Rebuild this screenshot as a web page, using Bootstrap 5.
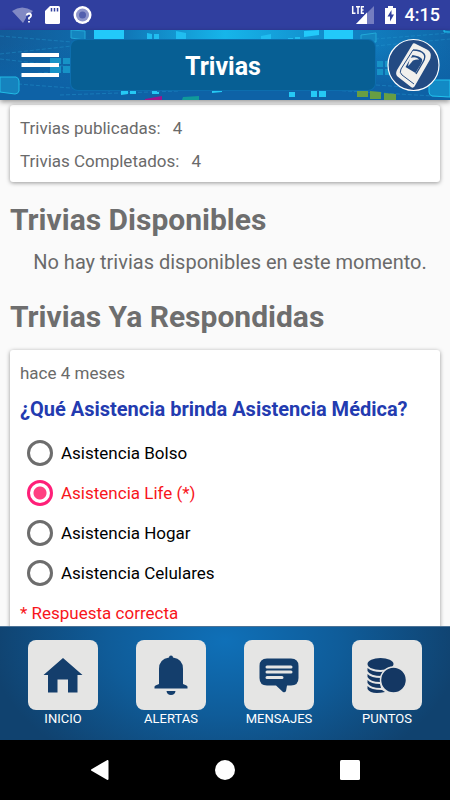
<!DOCTYPE html>
<html lang="es">
<head>
<meta charset="utf-8">
<meta name="viewport" content="width=device-width, initial-scale=1">
<title>Trivias</title>
<link rel="stylesheet" href="https://cdn.jsdelivr.net/npm/bootstrap@5.3.0/dist/css/bootstrap.min.css">
<style>
body{font-family:Roboto,"Liberation Sans",sans-serif;background:#fafafa;color:#6a6a6a;font-size:17px;line-height:24px}
svg{display:block}
.status-strip{height:30px;background:#303f9f;color:#fff;font-size:18px;font-weight:500;padding:0 10px 0 12px}
.top-bar{height:70px;background:#0f67ab;box-shadow:0 2px 5px rgba(0,0,0,.4);padding:0 10px 0 20px;z-index:2}
.top-art{z-index:-1}
.menu-btn{width:40px;height:28px}
.title-box{height:50px;margin:0 11px;background:#075f94;border-radius:7px;color:#fff;font-size:25px;line-height:53px;box-shadow:0 0 0 1px #0d6eae;font-weight:700}
.content-area{min-height:0;padding:5px 10px 0}
.panel{border-radius:3px;background:#fff;box-shadow:0 1px 4px rgba(0,0,0,.4);padding:7px 10px 4px}
.stat{line-height:33px}
.section-title{font-size:30px;line-height:35px;font-weight:700;color:#6e6e6e}
.empty-note{font-size:20px;line-height:26px;padding-left:10px}
.quiz{padding:11px 10px}
.question{font-size:20px;line-height:24px;font-weight:700;color:#233bb0}
.option{height:40px;padding-left:7px;color:#000}
.option .form-check-input{width:26px;height:26px;border:3px solid #6d6d6d;background:#fff}
.option .form-check-input:checked{border-color:#ff1f78;background:radial-gradient(circle,#ff4081 0 6px,#fff 7px)}
.right-answer{color:#f8151b}
.tab-bar{background:radial-gradient(ellipse 235px 150px at 50% 12%,#0f70b8,#0f5c99 50%,#10426f);height:114px;padding:13px 9px 0;border-top:1px solid #4d7396;z-index:2}
.tab-link{color:#fff;font-size:13px;line-height:18px}
.tile{width:70px;height:70px;border-radius:8px;background:#e5e5e4}
.sys-bar{height:60px;background:#000;gap:105px}
</style>
<script src="https://cdn.jsdelivr.net/npm/bootstrap@5.3.0/dist/js/bootstrap.bundle.min.js"></script>
</head>
<body class="d-flex flex-column vh-100 overflow-hidden">
<div class="status-strip d-flex align-items-center flex-shrink-0">
  <svg width="82" height="30" viewBox="12 0 82 30" aria-hidden="true">
    <path d="M12 11Q22 4 33 11L31 13Q26 13 26 18L23 23Z" fill="#8189c4"/>
    <path d="M26.500 15.500Q27 13.500 29 13.500Q31.300 13.700 31 15.800Q30.500 17 29 18V19.500M29 21V22.500" fill="none" stroke="#fff" stroke-width="1.800"/>
    <path d="M50 6H58.500Q60 6 60 7.500V22.500Q60 24 58.500 24H46.500Q45 24 45 22.500V11Z" fill="#fff"/>
    <path d="M51.500 8V11.500M54.500 8V11.500M57.500 8V11.500" stroke="#303f9f" stroke-width="1.500"/>
    <circle cx="82.500" cy="15" r="9" fill="#fff"/><circle cx="82.500" cy="15" r="6.500" fill="#8d95cb"/><circle cx="82.500" cy="15" r="3.500" fill="#5360ae"/>
  </svg>
  <svg class="ms-auto me-2" width="46" height="30" viewBox="351 0 46 30" aria-hidden="true">
    <path d="M374 6V24H356Z" fill="#747dc0"/><path d="M367 12.500V24H356Z" fill="#fff"/>
    <path d="M351 4H365V13H358V16H351Z" fill="#303f9f"/>
    <path d="M352.700 6V13.200H355.500M356 6.700H360M358 6.700V14M364 6.700H361.500V13.200H364M361.500 10H363.500" fill="none" stroke="#fff" stroke-width="1.500"/>
    <path d="M385 8H388V6H393V8H396V24H385Z" fill="#fff"/><path d="M391.500 10L387.500 16.500H390V21.500L394 14.500H391.500Z" fill="#303f9f"/>
  </svg>
  <span>4:15</span>
</div>
<header class="top-bar d-flex align-items-center flex-shrink-0 position-relative">
  <svg class="top-art position-absolute top-0 start-0 w-100 h-100" viewBox="0 0 450 70" preserveAspectRatio="xMidYMid slice" aria-hidden="true">
    <defs><linearGradient id="sky"><stop offset="0" stop-color="#125b98"/><stop offset=".25" stop-color="#0f6eb0"/><stop offset=".5" stop-color="#16b5ea"/><stop offset=".75" stop-color="#1186c7"/><stop offset="1" stop-color="#1067a9"/></linearGradient>
    <linearGradient id="low" x2="0" y2="1"><stop offset=".2" stop-color="#0c64a8" stop-opacity="0"/><stop offset=".8" stop-color="#0e62a6"/></linearGradient></defs>
    <path d="M0 0H450V70H0Z" fill="url(#sky)"/><path d="M0 0H450V70H0Z" fill="url(#low)"/>
    <g fill="none" stroke="#249bd1" stroke-width=".6" stroke-dasharray="4 2" opacity=".7"><path d="M0 6L72 12M0 24L72 16M0 29L72 37M20 45L72 40M18 54L110 61M60 65L180 61M375 9L450 3M375 16L450 9M330 60L450 67M376 55L405 57"/></g>
    <path d="M0 47H16Q19 48 19 51V61Q18 64 15 64L0 62Z" fill="#1583be" stroke="#22bce5"/>
    <path d="M71 0V8L85 10V1ZM361 5L376 3V12H361Z" fill="#1485bf" stroke="#22a9d8"/>
    <path d="M94 0H124V10H94ZM324 0H353V10H324ZM304 1L319 0V5L304 7Z" fill="#22c9fa"/>
    <path d="M147 3L152 4V9H147ZM154 4H159V9H154ZM176 1L186 3V10H176ZM261 6L271 4V10H261ZM288 8H293V10H288ZM295 7H300V10H295Z" fill="#20bdf0"/>
    <path d="M50 28H61V34H50ZM63 28H71V34H63ZM50 36H61V43H50ZM63 36H71V43H63ZM377 31H383V37H377ZM385 31H391V37H385ZM377 39H383V45H377ZM385 39H391V45H385Z" fill="#1793c7"/>
    <path d="M121 60H128V64L121 65ZM130 60H136V64H130ZM152 60H157V62H159V64H152ZM212 61L222 60V62L212 63ZM311 61H317V67H311ZM319 60H326V67H319ZM289 62H295V67H289Z" fill="#25c9f5"/>
    <path d="M145 69L162 66V70H145Z" fill="#9b168d"/><path d="M183 67L199 66V70H182Z" fill="#10999a"/>
    <path d="M357 60L368 61V67H357ZM370 61L381 62V69H370ZM384 63L396 64V70H384Z" fill="#689e43"/>
    <path d="M429 50H450V67L432 66Q429 65 429 62ZM444 0V2H450" fill="#128ac5" stroke="#20c3ee"/>
  </svg>
  <button type="button" class="menu-btn btn p-0 border-0 rounded-0" aria-label="Menú"><svg width="40" height="28" viewBox="0 0 40 28"><path d="M1.500 4H39M1.500 14H39M1.500 24H39" stroke="#fff" stroke-width="4"/></svg></button>
  <h1 class="title-box flex-grow-1 mb-0 text-center">Trivias</h1>
  <a href="#" aria-label="Perfil"><svg width="54" height="54" viewBox="0 0 54 54">
    <circle cx="27.500" cy="27" r="25.500" fill="#234b83" stroke="#fff" stroke-width="1.200"/>
    <path d="M27 5.500Q28 5 29 5.500L41 11.500Q46 14 44.500 20Q44 22 42 25L28.500 48.500Q27 50.500 25 49L11.500 38.500Q9 36 11 32Z" fill="#f1f0ed"/>
    <path d="M27 12L15 31Q13 34.500 16 37L28 46" fill="none" stroke="#234b83" stroke-width="1"/>
    <path d="M27 12Q35 12 38 16Q40 19 37 24L30 36" fill="none" stroke="#234b83" stroke-width="1.400"/>
    <path d="M26.500 17Q34 18 36 21Q37 23 35 26L29.500 35L19.500 29Z" fill="#234b83"/>
    <path d="M24 20Q31 18 33 22Q33 24 29 25L22 28Z" fill="#f1f0ed"/>
    <path d="M27 22.500Q33 20.500 34 23L28.500 32.500L21.500 29Z" fill="#234b83"/>
  </svg></a>
</header>
<main class="content-area flex-grow-1 overflow-hidden">
  <section class="panel">
    <div class="stat">Trivias publicadas:<span class="ps-2 ms-1">4</span></div>
    <div class="stat">Trivias Completados:<span class="ps-2 ms-1">4</span></div>
  </section>
  <h2 class="section-title mt-3 pt-1 mb-2 pb-1">Trivias Disponibles</h2>
  <p class="empty-note text-center mb-0">No hay trivias disponibles en este momento.</p>
  <h2 class="section-title mt-4 mb-3">Trivias Ya Respondidas</h2>
  <section class="panel quiz">
    <div>hace 4 meses</div>
    <fieldset>
      <legend class="question mt-2 pt-1 mb-2 pb-1">¿Qué Asistencia brinda Asistencia Médica?</legend>
      <div class="option d-flex align-items-center gap-2"><input class="form-check-input m-0 flex-shrink-0" type="radio" name="answer" id="bolso"><label for="bolso">Asistencia Bolso</label></div>
      <div class="option d-flex align-items-center gap-2"><input class="form-check-input m-0 flex-shrink-0" type="radio" name="answer" id="life" checked><label class="right-answer" for="life">Asistencia Life (*)</label></div>
      <div class="option d-flex align-items-center gap-2"><input class="form-check-input m-0 flex-shrink-0" type="radio" name="answer" id="hogar"><label for="hogar">Asistencia Hogar</label></div>
      <div class="option d-flex align-items-center gap-2"><input class="form-check-input m-0 flex-shrink-0" type="radio" name="answer" id="celulares"><label for="celulares">Asistencia Celulares</label></div>
    </fieldset>
    <div class="right-answer pt-2">* Respuesta correcta</div>
  </section>
</main>
<nav class="tab-bar d-flex flex-shrink-0" aria-label="Secciones">
  <a href="#" class="tab-link d-flex flex-column align-items-center text-decoration-none col"><span class="tile"><svg width="70" height="70" viewBox="0 0 70 70"><path d="M35 18L54.500 35H49.500V52.500H40V39.500H29.500V52.500H20V35H15.500Z" fill="#143e6c"/></svg></span>INICIO</a>
  <a href="#" class="tab-link d-flex flex-column align-items-center text-decoration-none col"><span class="tile"><svg width="70" height="70" viewBox="0 0 70 70"><path d="M33 17.500Q33 15.500 35 15.500Q37 15.500 37 17.500Q47 19 47 29V44L50.500 45.500Q52 46 51.500 48.500H18.500Q18 46 19.500 45.500L23 44V29Q23 19 33 17.500ZM30.500 51H39.500Q39 55 35 55Q31 55 30.500 51Z" fill="#143e6c"/></svg></span>ALERTAS</a>
  <a href="#" class="tab-link d-flex flex-column align-items-center text-decoration-none col"><span class="tile"><svg width="70" height="70" viewBox="0 0 70 70"><path d="M23 18.500H47Q54.500 18.500 54.500 26V38Q54.500 45.500 47 45.500H43L42 51Q41 53 39 52L32 45.500H23Q15.500 45.500 15.500 38V26Q15.500 18.500 23 18.500Z" fill="#143e6c"/><path d="M23 27H47M23 32H47M23 37.500H38" stroke="#e5e5e4" stroke-width="3" stroke-linecap="round"/></svg></span>MENSAJES</a>
  <a href="#" class="tab-link d-flex flex-column align-items-center text-decoration-none col"><span class="tile"><svg width="70" height="70" viewBox="0 0 70 70"><g fill="#143763"><ellipse cx="28.500" cy="24" rx="13" ry="6"/><path d="M15.500 28Q20 32 29 32L35 31L30 36Q18 36 15.500 31ZM15.500 34Q19 38 29 38L28 42Q18 42 15.500 37ZM15.500 40Q19 44 28 44L29 48Q18 48 15.500 43ZM15.500 46Q19 50 30 50L33 52Q19 55 15.500 49Z"/><circle cx="41.500" cy="40" r="13" stroke="#e5e5e4" stroke-width="1.500"/></g></svg></span>PUNTOS</a>
</nav>
<div class="sys-bar d-flex justify-content-center align-items-center flex-shrink-0">
  <button type="button" class="btn p-0 border-0" aria-label="Atrás"><svg width="20" height="20"><path d="M17.500 1V19L2 10Z" fill="#fff" stroke="#fff" stroke-width="2" stroke-linejoin="round"/></svg></button>
  <button type="button" class="btn p-0 border-0" aria-label="Inicio"><svg width="20" height="20"><circle cx="10" cy="10" r="10" fill="#fff"/></svg></button>
  <button type="button" class="btn p-0 border-0" aria-label="Recientes"><svg width="20" height="20"><rect width="20" height="20" rx="1.500" fill="#fff"/></svg></button>
</div>
</body>
</html>
